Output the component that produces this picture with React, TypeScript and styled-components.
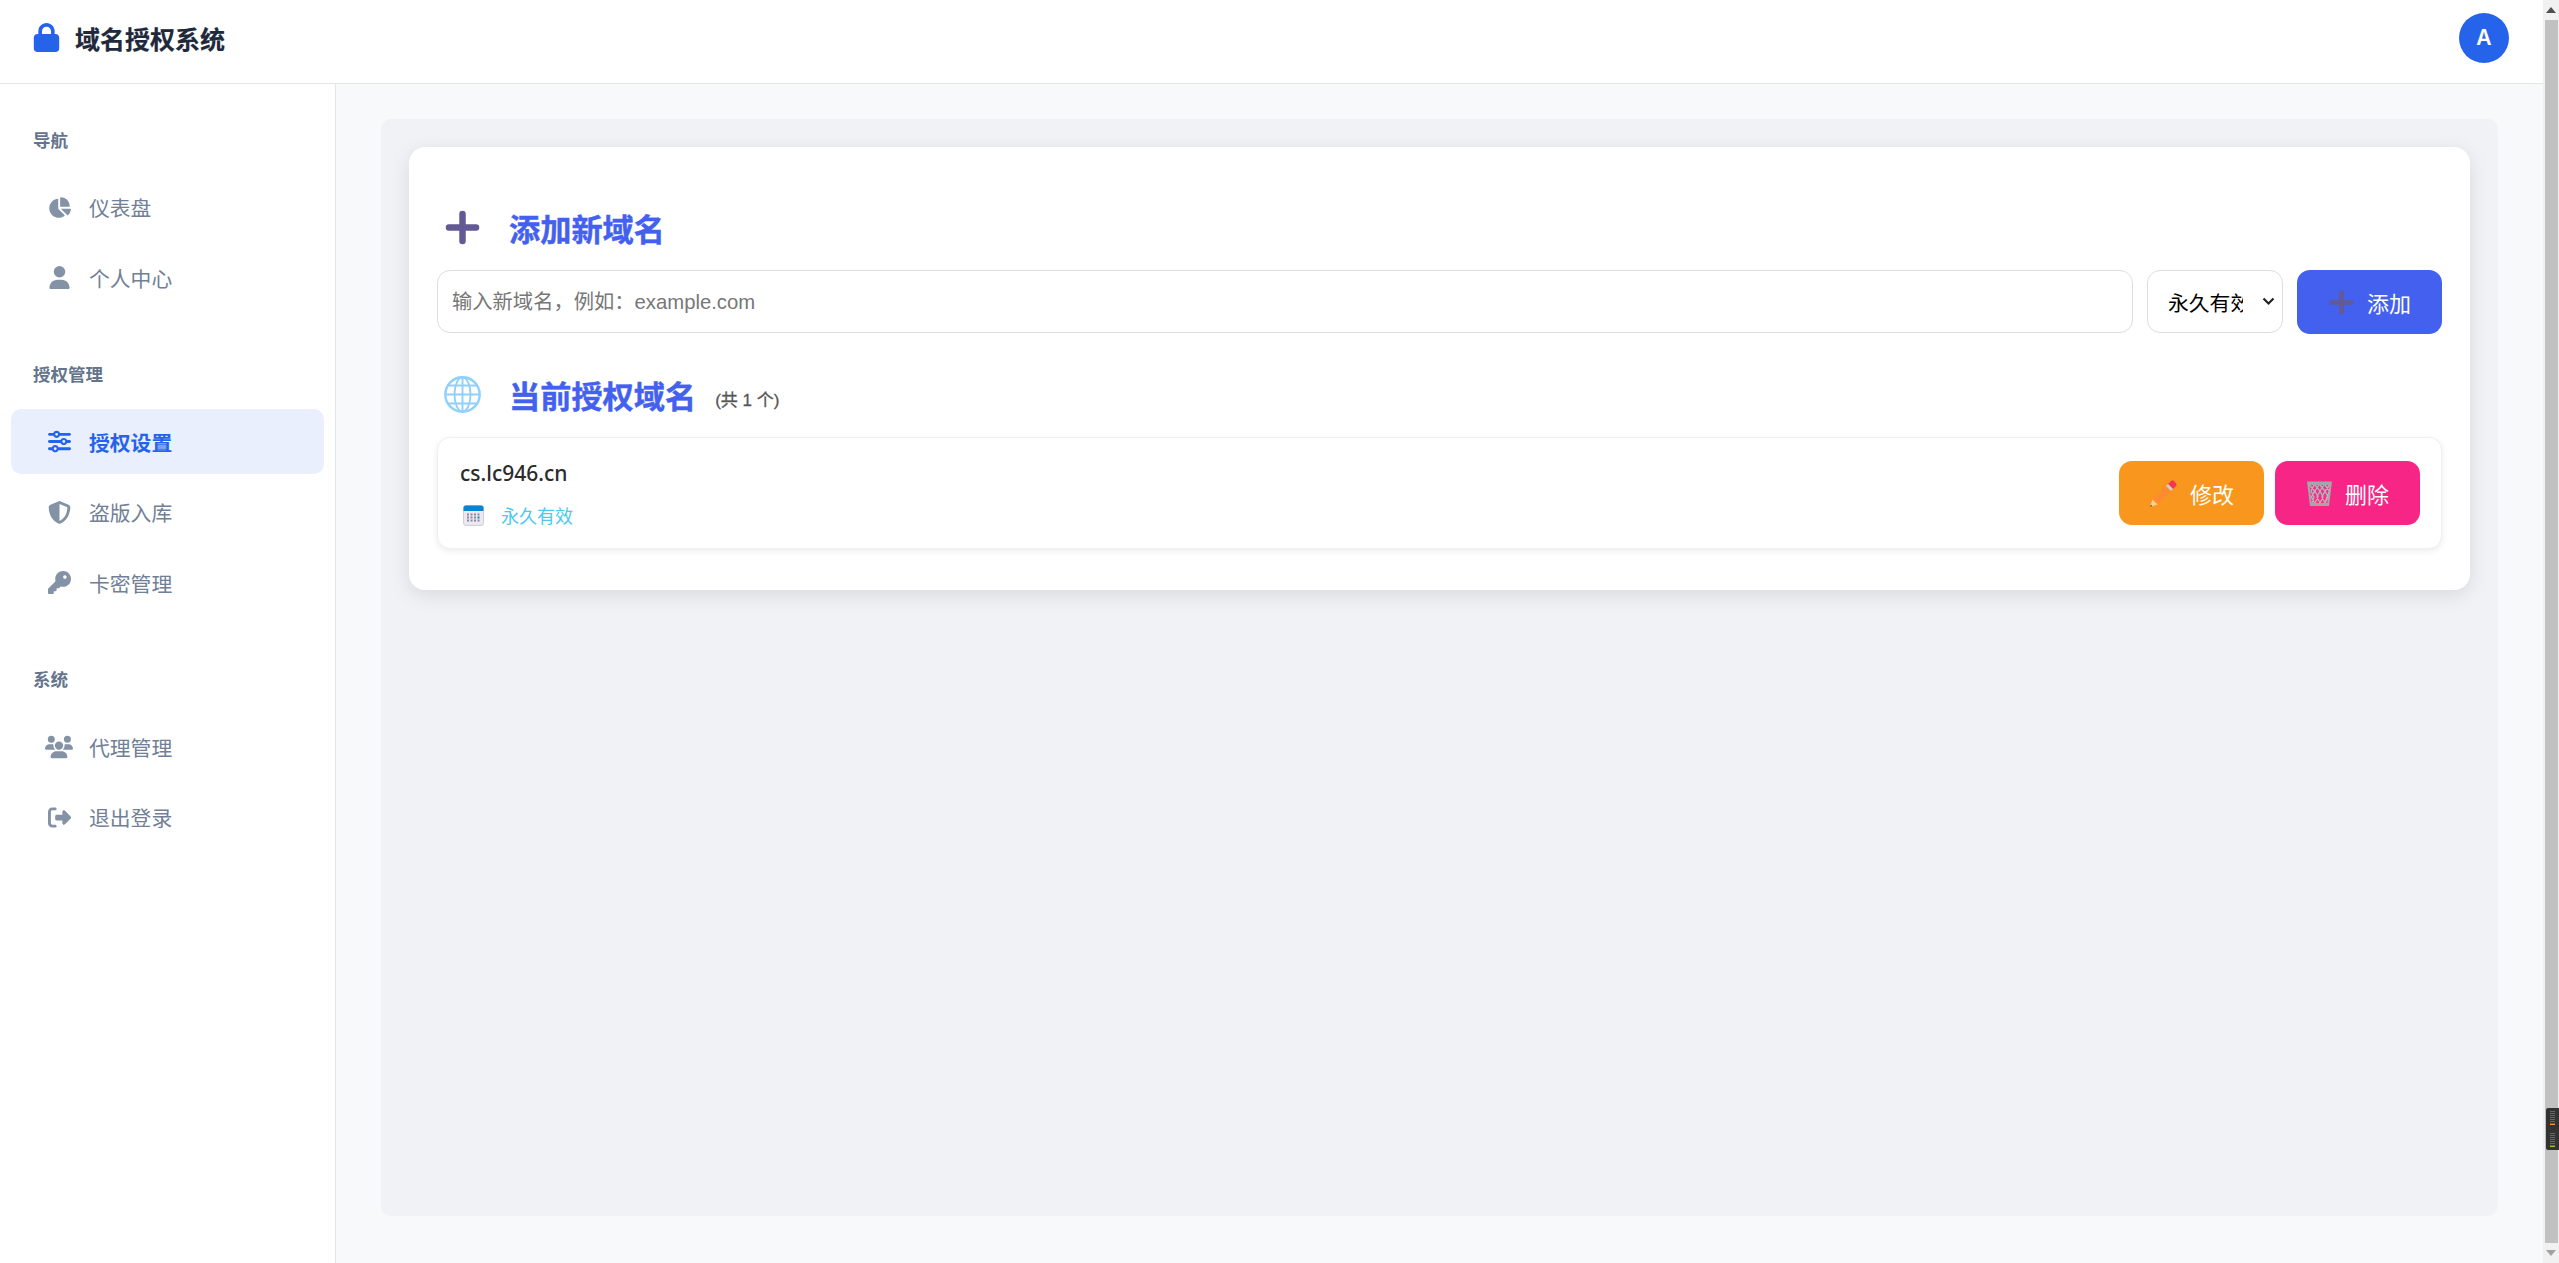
import React from 'react';
import styled, { createGlobalStyle } from 'styled-components';
import {
  FaChartPie,
  FaKey,
  FaLock,
  FaRightFromBracket,
  FaShieldHalved,
  FaSliders,
  FaUser,
  FaUsers,
} from 'react-icons/fa6';

const GlobalStyle = createGlobalStyle`
  html, body {
    margin: 0;
    height: 100%;
    overflow: hidden;
  }
  body {
    font-family: "Noto Sans", "Noto Sans CJK SC", sans-serif;
    background: #f8f9fb;
  }
  * { box-sizing: border-box; }
`;

const Shell = styled.div`
  display: flex;
  width: 100vw;
  height: 100vh;
`;

const Page = styled.div`
  flex: 1;
  min-width: 0;
  display: flex;
  flex-direction: column;
`;

const Header = styled.header`
  height: 84px;
  flex: none;
  display: flex;
  align-items: center;
  justify-content: space-between;
  padding: 0 34px 8px 32px;
  background: #fff;
  border-bottom: 1px solid #e2e6ec;
`;

const Brand = styled.div`
  display: flex;
  align-items: center;
  gap: 14px;
  font-family: "Noto Sans CJK SC", sans-serif;
  font-size: 25px;
  font-weight: 700;
  color: #1e293b;
  -webkit-text-stroke: 0.2px #1e293b;
  svg { color: #2563eb; font-size: 29px; }
`;

const Avatar = styled.div`
  width: 50px;
  height: 50px;
  border-radius: 50%;
  background: #2563eb;
  color: #fff;
  display: flex;
  align-items: center;
  justify-content: center;
  font-family: "Inter", sans-serif;
  font-size: 21px;
  font-weight: 600;
`;

const Body = styled.div`
  flex: 1;
  min-height: 0;
  display: flex;
`;

const Sidebar = styled.aside`
  width: 336px;
  flex: none;
  background: #fff;
  border-right: 1px solid #e2e6ec;
  padding: 41.5px 11px 0;
`;

const NavSection = styled.section`
  margin-bottom: 50px;
`;

const NavLabel = styled.h3`
  margin: 0 0 22px;
  padding-left: 22px;
  height: 27px;
  line-height: 27px;
  font-family: "Noto Sans CJK SC", sans-serif;
  font-size: 17.5px;
  font-weight: 700;
  color: #64748b;
`;

const NavItem = styled.a<{ $active?: boolean }>`
  display: flex;
  align-items: center;
  height: 65px;
  margin-bottom: 5.5px;
  padding-left: 35px;
  border-radius: 10px;
  font-family: "Noto Sans CJK SC", sans-serif;
  font-size: 20.8px;
  font-weight: ${(p) => (p.$active ? 700 : 400)};
  color: ${(p) => (p.$active ? '#2563eb' : '#718096')};
  background: ${(p) => (p.$active ? '#e9effd' : 'transparent')};
`;

const NavIcon = styled.span<{ $active?: boolean }>`
  width: 26px;
  margin-right: 17px;
  display: flex;
  justify-content: center;
  font-size: 23px;
  color: ${(p) => (p.$active ? '#2563eb' : '#8492a6')};
  svg { flex: none; }
`;

const Main = styled.main`
  flex: 1;
  min-width: 0;
  padding: 35px 45px 47px 45px;
`;

const Panel = styled.div`
  height: 100%;
  padding: 28px;
  border-radius: 10px;
  background: #f0f2f5;
`;

const Card = styled.div`
  height: 443px;
  padding: 49px 28px 0;
  background: #fff;
  border-radius: 16px;
  box-shadow: 0 5px 20px rgba(0, 0, 0, 0.1);
`;

const Title = styled.h2`
  display: flex;
  align-items: center;
  height: 62px;
  margin: 0 0 12px;
  padding-left: 7px;
  font-family: "Noto Sans CJK SC", sans-serif;
  font-size: 31.2px;
  font-weight: 700;
  color: #4361ee;
  -webkit-text-stroke: 0.4px #4361ee;
  svg { margin-right: 28px; flex: none; }
`;

const Count = styled.small`
  margin: 9px 0 0 19px;
  font-family: "Liberation Sans", "Noto Sans CJK SC", sans-serif;
  font-size: 17px;
  font-weight: 400;
  color: #555;
  -webkit-text-stroke: 0.3px #555;
`;

const AddRow = styled.form`
  display: flex;
  gap: 14px;
  height: 64px;
  margin-bottom: 29px;
`;

const DomainInput = styled.input`
  flex: 1;
  min-width: 0;
  height: 63px;
  padding: 1px 14px 0;
  border: 1.3px solid #ddd;
  border-radius: 13px;
  outline: none;
  font-family: "Liberation Sans", "Noto Sans CJK SC", sans-serif;
  font-size: 20.3px;
  &::placeholder { color: #777; opacity: 1; }
`;

const SelectWrap = styled.div`
  position: relative;
  width: 136px;
  height: 63px;
  flex: none;
  svg { position: absolute; right: 8px; top: 27px; pointer-events: none; }
`;

const TermSelect = styled.select`
  appearance: none;
  width: 100%;
  height: 100%;
  padding: 0 39px 0 20px;
  background: #fff;
  border: 1.3px solid #ddd;
  border-radius: 13px;
  font-family: "Noto Sans CJK SC", sans-serif;
  font-size: 20.8px;
  color: #000;
`;

const ActionButton = styled.button<{ $bg: string }>`
  display: flex;
  align-items: center;
  justify-content: center;
  gap: 12px;
  width: 145px;
  height: 64px;
  flex: none;
  border: 0;
  border-radius: 13px;
  background: ${(p) => p.$bg};
  color: #fff;
  font-family: "Noto Sans CJK SC", sans-serif;
  font-size: 22px;
`;

const DomainCard = styled.div`
  display: flex;
  align-items: center;
  justify-content: space-between;
  height: 112px;
  padding: 0 21px 0 22px;
  background: #fff;
  border: 1.3px solid #f0f0f0;
  border-radius: 13px;
  box-shadow: 0 2px 6px rgba(0, 0, 0, 0.08);
`;

const DomainName = styled.div`
  font-family: "Noto Sans", sans-serif;
  font-size: 21px;
  font-weight: 500;
  line-height: 30px;
  color: #2b2b2b;
`;

const DomainMeta = styled.div`
  display: flex;
  align-items: center;
  gap: 17px;
  margin-top: 14.5px;
  padding-left: 3px;
  font-family: "Noto Sans CJK SC", sans-serif;
  font-size: 18px;
  line-height: 26px;
  color: #4cc9f0;
`;

const ButtonGroup = styled.div`
  display: flex;
  gap: 11px;
`;

const ScrollRail = styled.div`
  position: relative;
  width: 16px;
  flex: none;
  display: flex;
  flex-direction: column;
  align-items: flex-end;
  background: #f1f1f1;
`;

const ScrollArrow = styled.div`
  height: 20px;
  width: 100%;
  display: flex;
  align-items: center;
  justify-content: center;
  flex: none;
`;

const ScrollThumb = styled.div`
  flex: 1;
  width: 13px;
  margin-right: 1px;
  background: #c1c1c1;
`;

const Widget = styled.div`
  position: absolute;
  right: 0;
  bottom: 113px;
  width: 13px;
  height: 42px;
  display: flex;
  flex-direction: column;
  align-items: center;
  justify-content: center;
  gap: 8px;
  background: #333;
  border-radius: 2px 0 0 2px;
`;

const WidgetMark = styled.div<{ $color: string }>`
  width: 5px;
  height: 14px;
  background: repeating-linear-gradient(#666 0 1px, transparent 1px 2px);
  border-bottom: 1px solid ${(p) => p.$color};
`;

const PlusEmoji = ({ size }: { size: number }) => (
  <svg width={size} height={size} viewBox="0 0 32 32">
    <path
      d="M16 1.500a2.800 2.800 0 0 1 2.800 2.800v8.900h8.900a2.800 2.800 0 0 1 0 5.600h-8.900v8.900a2.800 2.800 0 0 1-5.600 0v-8.900H4.300a2.800 2.800 0 0 1 0-5.600h8.900V4.300A2.800 2.800 0 0 1 16 1.500z"
      fill="#635994"
    />
  </svg>
);

const GlobeEmoji = () => (
  <svg width={37} height={37} viewBox="0 0 37 37" fill="none" stroke="#8fd0ff" strokeWidth="1.9">
    <circle cx="18.500" cy="18.500" r="17.200" strokeWidth="2.400" />
    <ellipse cx="18.500" cy="18.500" rx="8" ry="17.200" />
    <path d="M18.500 1.300v34.400M1.300 18.500h34.400M4 9.500h29M4 27.500h29" />
  </svg>
);

const CalendarEmoji = () => (
  <svg width={21} height={21} viewBox="0 0 21 21">
    <rect x="0.500" y="0.500" width="20" height="20" rx="2.500" fill="#ece8f1" stroke="#c9c2d3" strokeWidth="0.800" />
    <path d="M0.500 6V3a2.500 2.500 0 0 1 2.500-2.500h15A2.500 2.500 0 0 1 20.500 3v3z" fill="#0a84cf" />
    {[8.5, 11.5, 14.5].map((y) =>
      [5, 8.5, 12, 15.5].map((x) => (
        <rect
          key={`${x}-${y}`}
          x={x - 1}
          y={y}
          width="2"
          height="2"
          fill={x === 15.5 && y === 11.5 ? '#0a84cf' : '#8d8799'}
        />
      )),
    )}
  </svg>
);

const PencilEmoji = () => (
  <svg width={29} height={29} viewBox="0 0 29 29">
    <path d="M6 18l13-13 5 5-13 13-7.500 2.500z" fill="#ff8a30" />
    <path d="M19 5l3-3a2 2 0 0 1 2.800 0l2.200 2.200a2 2 0 0 1 0 2.800l-3 3z" fill="#f4364f" />
    <path d="M17 7l2-2 5 5-2 2z" fill="#cfcfcf" />
    <path d="M3.500 20.500l5 5-7.500 2.500z" fill="#ffd08a" />
    <path d="M2 25.800l1.300 1.300-2.300.9z" fill="#444" />
  </svg>
);

const TrashEmoji = () => (
  <svg width={27} height={28} viewBox="0 0 27 28">
    <path d="M1 2.500h25L23 27H4z" fill="#a6a6a8" />
    <path d="M3.500 6h20l-2.200 18H5.700z" fill="#f0308c" />
    <path
      d="M3.500 6l5 6-3 6 3 6M9 6l5 6-3 6 3 6M14 6l5 6-3 6 3 6M19 6l4.500 6-2.500 6-2 6M8 6l-3 6 3 6-2 6M13 6l-4 6 3 6-3 6M18 6l-4 6 3 6-3 6M23.500 6l-4.500 6 3 6-3 6"
      fill="none"
      stroke="#b5b5b8"
      strokeWidth="1.300"
    />
  </svg>
);

const sections = [
  {
    label: '导航',
    items: [
      { text: '仪表盘', icon: <FaChartPie /> },
      { text: '个人中心', icon: <FaUser /> },
    ],
  },
  {
    label: '授权管理',
    items: [
      { text: '授权设置', icon: <FaSliders />, active: true },
      { text: '盗版入库', icon: <FaShieldHalved /> },
      { text: '卡密管理', icon: <FaKey /> },
    ],
  },
  {
    label: '系统',
    items: [
      { text: '代理管理', icon: <FaUsers size={28} /> },
      { text: '退出登录', icon: <FaRightFromBracket /> },
    ],
  },
];

const App = () => {
  return (
    <>
      <GlobalStyle />
      <Shell>
        <Page>
          <Header>
            <Brand>
              <FaLock />
              域名授权系统
            </Brand>
            <Avatar>A</Avatar>
          </Header>
          <Body>
            <Sidebar>
              {sections.map((section) => (
                <NavSection key={section.label}>
                  <NavLabel>{section.label}</NavLabel>
                  {section.items.map((item) => (
                    <NavItem key={item.text} $active={item.active}>
                      <NavIcon $active={item.active}>{item.icon}</NavIcon>
                      {item.text}
                    </NavItem>
                  ))}
                </NavSection>
              ))}
            </Sidebar>
            <Main>
              <Panel>
                <Card>
                  <Title>
                    <PlusEmoji size={37} />
                    添加新域名
                  </Title>
                  <AddRow>
                    <DomainInput placeholder="输入新域名，例如：example.com" />
                    <SelectWrap>
                      <TermSelect defaultValue="永久有效">
                        <option>永久有效</option>
                      </TermSelect>
                      <svg width="13" height="9" viewBox="0 0 13 9" fill="none" stroke="#222" strokeWidth="2.200">
                        <path d="M1.500 1.500l5 5 5-5" />
                      </svg>
                    </SelectWrap>
                    <ActionButton type="button" $bg="#4361ee">
                      <PlusEmoji size={27} />
                      添加
                    </ActionButton>
                  </AddRow>
                  <Title>
                    <GlobeEmoji />
                    当前授权域名
                    <Count>(共 1 个)</Count>
                  </Title>
                  <DomainCard>
                    <div>
                      <DomainName>cs.lc946.cn</DomainName>
                      <DomainMeta>
                        <CalendarEmoji />
                        永久有效
                      </DomainMeta>
                    </div>
                    <ButtonGroup>
                      <ActionButton type="button" $bg="#f8961e">
                        <PencilEmoji />
                        修改
                      </ActionButton>
                      <ActionButton type="button" $bg="#f72585">
                        <TrashEmoji />
                        删除
                      </ActionButton>
                    </ButtonGroup>
                  </DomainCard>
                </Card>
              </Panel>
            </Main>
          </Body>
        </Page>
        <ScrollRail>
          <ScrollArrow>
            <svg width="10" height="6" viewBox="0 0 10 6"><path d="M5 0l5 6H0z" fill="#505050" /></svg>
          </ScrollArrow>
          <ScrollThumb />
          <ScrollArrow>
            <svg width="10" height="6" viewBox="0 0 10 6"><path d="M0 0h10L5 6z" fill="#a3a3a3" /></svg>
          </ScrollArrow>
          <Widget>
            <WidgetMark $color="#f59a23" />
            <WidgetMark $color="#7ed321" />
          </Widget>
        </ScrollRail>
      </Shell>
    </>
  );
};

export default App;
